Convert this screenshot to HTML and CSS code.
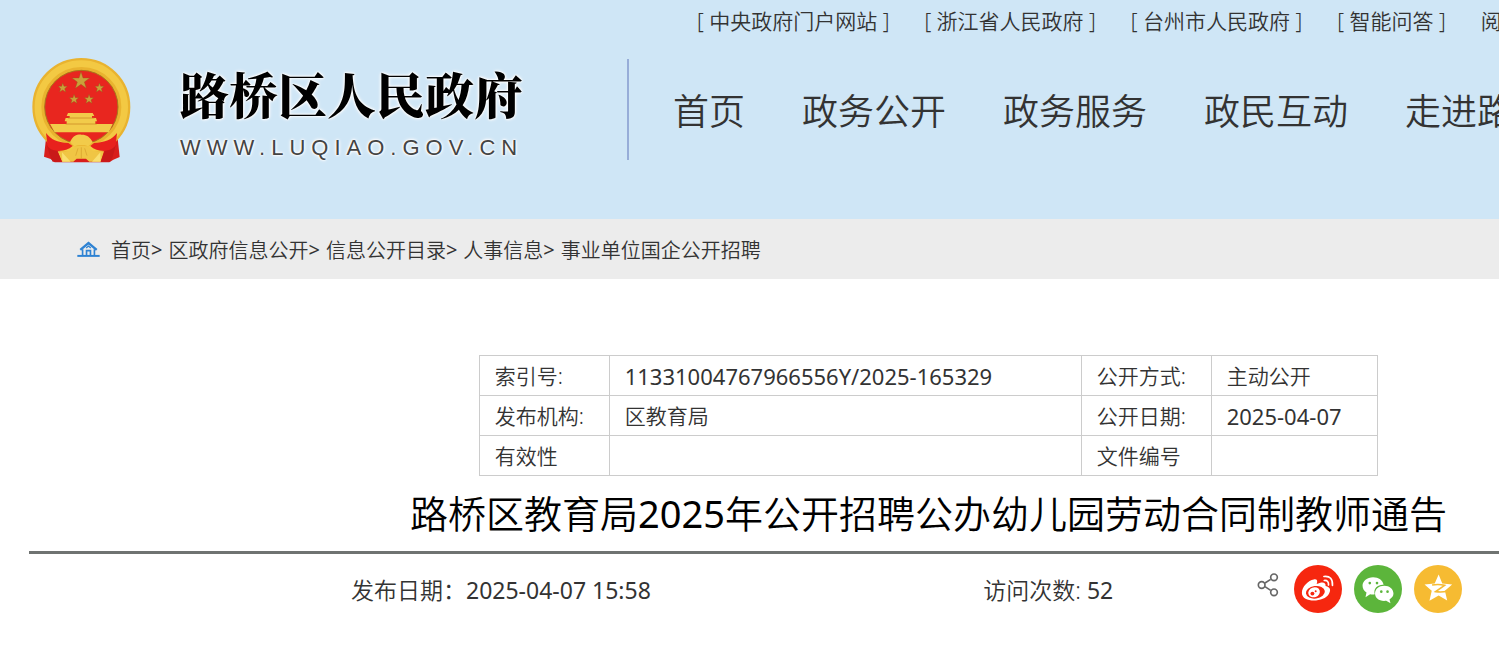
FILE: index.html
```html
<!DOCTYPE html>
<html lang="zh-CN">
<head>
    <meta charset="UTF-8">
    <meta name="viewport" content="width=device-width, initial-scale=1.0">
    <title>路桥区教育局2025年公开招聘公办幼儿园劳动合同制教师通告</title>
    <link rel="stylesheet" href="styles.css">
</head>
<body>
    <header class="header">
        <div class="brand">
            <svg class="emblem" viewBox="33 36 300 318" aria-hidden="true">
                <path d="M80 262 L72 335 L92 342 L104 352 L268 352 L280 344 L299 336 L291 262z" fill="#d81e1c"/>
                <circle cx="184" cy="186" r="128" fill="#e02a20" stroke="#e9b32f" stroke-width="38"/>
                <circle cx="184" cy="186" r="130" fill="none" stroke="#f3c943" stroke-width="20"/>
                <circle cx="184" cy="186" r="110" fill="#e8261f" stroke="#a8791c" stroke-width="3"/>
                <g fill="#c9a13a" stroke="#8c5d1b" stroke-width="1">
                    <path d="M183 80 L189 99 L209 99 L193 111 L199 130 L183 118 L166 130 L172 111 L156 99 L177 99z"/>
                    <path d="M128 114 L132 124 L142 124 L134 131 L137 141 L128 135 L119 141 L122 131 L115 124 L125 124z"/>
                    <path d="M238 114 L242 124 L252 124 L244 131 L247 141 L238 135 L229 141 L232 131 L225 124 L235 124z"/>
                    <path d="M162 148 L166 158 L176 158 L168 165 L171 175 L162 169 L153 175 L156 165 L148 158 L159 158z"/>
                    <path d="M207 148 L211 158 L221 158 L213 165 L216 175 L207 169 L198 175 L201 165 L193 158 L204 158z"/>
                </g>
                <g fill="#f2cb4a">
                    <path d="M144 204 H218 L223 213 H216 V219 H228 L231 229 H226 V237 H278 L266 262 H104 L90 237 H140 V229 H134 L137 219 H149 V213 H140z"/>
                    <path d="M150 292 C158 272 172 268 184 269 C197 268 211 275 218 292 L205 304 Q184 296 163 304z"/>
                </g>
                <path d="M144 219 H223 M137 237 H230" stroke="#c5801f" stroke-width="2"/>
                <path d="M78 264 C94 284 110 292 145 294 L158 303 C140 319 110 322 84 312z" fill="#e8211d"/>
                <path d="M291 264 C276 284 256 292 222 294 L211 303 C228 319 256 322 286 312z" fill="#e8211d"/>
                <path d="M113 319 H148 L163 306 Q184 298 206 306 L220 319 H252 L242 350 H208 L198 341 H170 L160 350 H126z" fill="#f0c544"/>
                <path d="M126 322 L152 350 H127z M241 322 L216 350 H242z" fill="#f9df70"/>
                <path d="M80 300 Q90 316 112 318 L126 350 H98 L92 338z M288 300 Q277 316 254 318 L242 350 H270 L277 338z" fill="#c91919"/>
                <path d="M184 307 V340 M174 310 L167 332 M194 310 L201 332" stroke="#d59d2a" stroke-width="2"/>
            </svg>
            <div class="brand-text">
                <div class="brand-name">路桥区人民政府</div>
                <div class="brand-url">WWW.LUQIAO.GOV.CN</div>
            </div>
        </div>
        <div class="header-right">
            <div class="top-links">
                <a href="#">[ 中央政府门户网站 ]</a>
                <a href="#">[ 浙江省人民政府 ]</a>
                <a href="#">[ 台州市人民政府 ]</a>
                <a href="#">[ 智能问答 ]</a>
                <a href="#">阅</a>
            </div>
            <nav class="nav">
                <a href="#">首页</a>
                <a href="#">政务公开</a>
                <a href="#">政务服务</a>
                <a href="#">政民互动</a>
                <a href="#">走进路</a>
            </nav>
        </div>
    </header>

    <div class="breadcrumb">
        <svg class="home-icon" viewBox="50 90 70 48" aria-hidden="true">
            <path d="M51 135 H119" stroke="#2f83d3" stroke-width="6"/>
            <path d="M60 117 L85 96 L110 117" fill="none" stroke="#2f83d3" stroke-width="7"/>
            <path d="M67 115 V133 M103 115 V133 M79 133 V119 H91 V133" fill="none" stroke="#2f83d3" stroke-width="5"/>
            <path d="M78 111 L85 105 L92 111" fill="none" stroke="#2f83d3" stroke-width="4"/>
        </svg>
        <a href="#">首页</a><span>&gt;</span>
        <a href="#">区政府信息公开</a><span>&gt;</span>
        <a href="#">信息公开目录</a><span>&gt;</span>
        <a href="#">人事信息</a><span>&gt;</span>
        <a href="#">事业单位国企公开招聘</a>
    </div>

    <main class="article">
        <table class="info">
            <tr>
                <th scope="row" class="col-label">索引号:</th>
                <td class="col-main number">11331004767966556Y/2025-165329</td>
                <th scope="row" class="col-label">公开方式:</th>
                <td>主动公开</td>
            </tr>
            <tr>
                <th scope="row">发布机构:</th>
                <td>区教育局</td>
                <th scope="row">公开日期:</th>
                <td class="number">2025-04-07</td>
            </tr>
            <tr>
                <th scope="row">有效性</th>
                <td></td>
                <th scope="row">文件编号</th>
                <td></td>
            </tr>
        </table>

        <h1 class="title">路桥区教育局<span class="digits">2025</span>年公开招聘公办幼儿园劳动合同制教师通告</h1>

        <div class="meta">
            <div>发布日期：<span class="digits">2025-04-07 15:58</span></div>
            <div>访问次数: <span class="digits">52</span></div>
            <div class="share">
                <svg class="share-icon" viewBox="52 68 66 72" aria-hidden="true">
                    <g fill="none" stroke="#666" stroke-width="5">
                        <path d="M76 98 L93 87 M76 109 L93 120"/>
                        <circle cx="66" cy="104" r="10"/>
                        <circle cx="103" cy="81" r="10"/>
                        <circle cx="103" cy="126" r="10"/>
                    </g>
                </svg>
                <a href="#" aria-label="微博">
                    <svg viewBox="162 44 146 146">
                        <circle cx="235" cy="117" r="73" fill="#f6270f"/>
                        <path d="M186 129 C186 109 206 91 222 88 C232 86 235 92 231 102 C246 94 260 95 258 108 C273 112 275 121 268 132 C254 158 186 160 186 129z" fill="#fff"/>
                        <ellipse cx="227" cy="127" rx="29" ry="19" transform="rotate(-8 227 127)" fill="#f6270f"/>
                        <ellipse cx="223" cy="127" rx="18" ry="15" transform="rotate(-20 223 127)" fill="#fff"/>
                        <circle cx="218" cy="131" r="6" fill="#f6270f"/>
                        <circle cx="228" cy="124" r="3" fill="#f6270f"/>
                        <path d="M254 91 Q268 90 267 105 M253 79 Q281 76 279 106" fill="none" stroke="#fff" stroke-width="5" stroke-linecap="round"/>
                    </svg>
                </a>
                <a href="#" aria-label="微信">
                    <svg viewBox="342 44 146 146">
                        <circle cx="415" cy="117" r="73" fill="#5cb53b"/>
                        <path d="M400 81 C382 81 368 92 368 107 C368 116 373 123 380 128 L377 142 L391 133 Q400 135 405 133 C400 114 415 103 432 104 C430 90 417 81 400 81z" fill="#fff"/>
                        <path d="M434 107 C418 107 406 117 406 131 C406 145 420 156 440 153 L453 160 L450 149 C458 144 462 138 462 131 C462 117 450 107 434 107z" fill="#fff"/>
                        <circle cx="390" cy="99" r="4" fill="#5cb53b"/>
                        <circle cx="412" cy="99" r="4" fill="#5cb53b"/>
                        <circle cx="425" cy="125" r="4" fill="#5cb53b"/>
                        <circle cx="444" cy="125" r="4" fill="#5cb53b"/>
                    </svg>
                </a>
                <a href="#" aria-label="QQ空间">
                    <svg viewBox="522 44 146 146">
                        <circle cx="595" cy="117" r="73" fill="#f6bb32"/>
                        <path d="M597 73 L608 100 L638 103 L616 122 L623 152 L597 137 L569 153 L576 122 L554 103 L585 100z" fill="#fff"/>
                        <path d="M577 105 Q597 101 615 106 L588 125 Q604 128 624 124" fill="none" stroke="#f6bb32" stroke-width="5"/>
                    </svg>
                </a>
            </div>
        </div>
    </main>
</body>
</html>
```
FILE: styles.css
```css
* {
    box-sizing: border-box;
}

body {
    margin: 0;
    overflow-x: hidden;
    font-family: "Noto Sans", "Noto Sans CJK SC", sans-serif;
    font-size: 21px;
    font-weight: 350;
    color: #333;
    background: #fff;
}

a {
    color: inherit;
    text-decoration: none;
}

.digits {
    font-weight: 400;
}

/* Header */
.header {
    display: flex;
    min-height: 219px;
    background: #cfe6f6;
    overflow: hidden;
    white-space: nowrap;
}

.brand {
    flex: none;
    display: flex;
    align-items: flex-start;
    gap: 49px;
    width: 627px;
    padding: 57px 0 0 31px;
}

.emblem {
    width: 100px;
    height: 106px;
}

.brand-name {
    font-family: "Noto Serif CJK SC", "Noto Sans CJK SC", serif;
    font-size: 49px;
    font-weight: 900;
    line-height: 72px;
    color: #000;
    text-shadow: 0 0 2px #fff, 0 0 2px #fff, 0 0 3px #fff, 0 0 4px #fff;
}

.brand-url {
    font-family: "Liberation Sans", Arial, sans-serif;
    font-size: 22px;
    line-height: 38px;
    letter-spacing: 6px;
    color: #444;
    text-shadow: 0 0 2px #fff, 0 0 2px #fff, 0 0 3px #fff, 0 0 4px #fff;
}

.header-right {
    flex: 1;
    min-width: 0;
}

.top-links {
    display: flex;
    gap: 35px;
    padding-left: 70px;
    line-height: 42px;
}

.top-links a,
.nav a {
    flex: none;
}

.nav {
    display: flex;
    align-items: center;
    gap: 57px;
    height: 101px;
    margin-top: 17px;
    padding-left: 44px;
    border-left: 2px solid #97add8;
    font-size: 36px;
}

/* Breadcrumb */
.breadcrumb {
    display: flex;
    align-items: center;
    height: 60px;
    padding-left: 77px;
    background: #ececec;
    font-size: 20px;
    white-space: nowrap;
}

.breadcrumb span {
    margin-right: 6px;
    font-weight: 400;
}

.home-icon {
    width: 23px;
    height: 16px;
    margin-right: 11px;
}

/* Article */
.article {
    width: 120%;
    margin-left: 29px;
    padding-top: 76px;
}

.info {
    width: 50%;
    margin: 0 auto;
    border-collapse: collapse;
    table-layout: fixed;
}

.info th,
.info td {
    height: 40px;
    padding: 0 15px;
    border: 1px solid #ccc;
    font-weight: 350;
    line-height: 30px;
    text-align: left;
    white-space: nowrap;
}

.info .number {
    font-size: 22px;
    font-weight: 400;
}

.col-label {
    width: 130px;
}

.col-main {
    width: 472px;
}

.title {
    margin: 0;
    padding: 9px 0;
    border-bottom: 3px solid #6f7371;
    font-size: 38px;
    font-weight: 350;
    line-height: 57px;
    text-align: center;
    color: #000;
}

.meta {
    display: grid;
    grid-template-columns: 632fr 274fr 570fr;
    align-items: center;
    min-height: 70px;
    padding-left: 322px;
    font-size: 23px;
}

.share {
    display: flex;
    align-items: center;
    gap: 12px;
}

.share-icon {
    width: 22px;
    height: 24px;
    margin: 0 3px 8px 0;
}

.share a,
.share a svg {
    display: block;
    width: 48px;
    height: 48px;
}
```
